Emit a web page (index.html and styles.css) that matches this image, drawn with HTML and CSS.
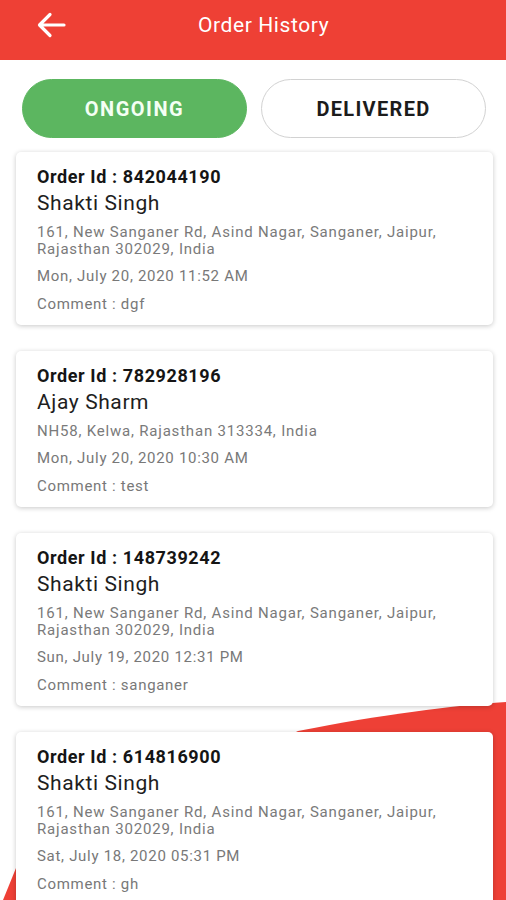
FILE: index.html
```html
<!DOCTYPE html>
<html>
<head>
<meta charset="utf-8">
<link rel="stylesheet" href="styles.css">
</head>
<body>
<div class="screen">
  <svg class="blob" width="506" height="900" viewBox="0 0 506 900"><path d="M298 731 C 385 714, 450 706, 506 702 L506 900 L3 900 L16 868 Z" fill="#ee4036"/></svg>
  <header class="topbar">
    <svg class="back" width="30" height="26" viewBox="0 0 30 26"><path d="M28 13 H4 M14 2.5 L3.5 13 L14 23.5" fill="none" stroke="#fff" stroke-width="3.2" stroke-linecap="round" stroke-linejoin="round"/></svg>
    <h1 class="title">Order History</h1>
  </header>
  <div class="tabs">
    <div class="tab tab-active">ONGOING</div>
    <div class="tab">DELIVERED</div>
  </div>
  <div class="list">
    <div class="card">
      <div class="oid">Order Id : 842044190</div>
      <div class="name">Shakti Singh</div>
      <div class="addr">161, New Sanganer Rd, Asind Nagar, Sanganer, Jaipur,<br>Rajasthan 302029, India</div>
      <div class="meta">Mon, July 20, 2020 11:52 AM</div>
      <div class="meta">Comment : dgf</div>
    </div>
    <div class="card">
      <div class="oid">Order Id : 782928196</div>
      <div class="name">Ajay Sharm</div>
      <div class="addr">NH58, Kelwa, Rajasthan 313334, India</div>
      <div class="meta">Mon, July 20, 2020 10:30 AM</div>
      <div class="meta">Comment : test</div>
    </div>
    <div class="card">
      <div class="oid">Order Id : 148739242</div>
      <div class="name">Shakti Singh</div>
      <div class="addr">161, New Sanganer Rd, Asind Nagar, Sanganer, Jaipur,<br>Rajasthan 302029, India</div>
      <div class="meta">Sun, July 19, 2020 12:31 PM</div>
      <div class="meta">Comment : sanganer</div>
    </div>
    <div class="card">
      <div class="oid">Order Id : 614816900</div>
      <div class="name">Shakti Singh</div>
      <div class="addr">161, New Sanganer Rd, Asind Nagar, Sanganer, Jaipur,<br>Rajasthan 302029, India</div>
      <div class="meta">Sat, July 18, 2020 05:31 PM</div>
      <div class="meta">Comment : gh</div>
      <div class="divider"></div>
    </div>
  </div>
</div>
</body>
</html>
```
FILE: styles.css
```css
html, body {
  margin: 0;
  padding: 0;
  background: #fff;
}
body {
  font-family: Roboto, "Liberation Sans", sans-serif;
  overflow: hidden;
}
.screen {
  position: relative;
  width: 506px;
  height: 900px;
  overflow: hidden;
}
.blob {
  position: absolute;
  left: 0;
  top: 0;
  z-index: 0;
}
.topbar {
  position: relative;
  z-index: 1;
  height: 60px;
  background: #ee4035;
  display: flex;
  align-items: center;
  padding-left: 36px;
  box-sizing: border-box;
}
.back {
  display: block;
  margin-top: -10px;
}
.title {
  margin: -10px 0 0 132px;
  font-size: 21px;
  font-weight: 400;
  color: #fff;
  letter-spacing: 0.6px;
}
.tabs {
  position: relative;
  z-index: 1;
  display: flex;
  gap: 14px;
  padding: 19px 20px 0 22px;
}
.tab {
  width: 225px;
  height: 59px;
  box-sizing: border-box;
  border-radius: 30px;
  border: 1.5px solid #d2d2d2;
  background: #fff;
  display: flex;
  align-items: center;
  justify-content: center;
  font-size: 20px;
  font-weight: 700;
  color: #1c1c1c;
  letter-spacing: 1.3px;
}
.tab-active {
  background: #5cb660;
  border-color: #5cb660;
  color: #f4fff4;
  letter-spacing: 1.5px;
}
.list {
  position: relative;
  z-index: 1;
  display: flex;
  flex-direction: column;
  gap: 26px;
  padding: 14px 12px 0 16px;
}
.card {
  width: 477px;
  box-sizing: border-box;
  background: #fff;
  border-radius: 5px;
  box-shadow: 0 1px 5px rgba(0, 0, 0, 0.22);
  padding: 14px 12px 11px 21px;
}
.oid {
  font-size: 18px;
  font-weight: 700;
  line-height: 22px;
  color: #151515;
  letter-spacing: 0.6px;
}
.name {
  font-size: 21px;
  line-height: 30px;
  color: #1e1e1e;
  letter-spacing: 0.6px;
}
.addr {
  margin-top: 6px;
  font-size: 15px;
  line-height: 17px;
  color: #7a7a7a;
  letter-spacing: 0.8px;
}
.meta {
  margin-top: 8px;
  font-size: 15px;
  line-height: 20px;
  color: #787878;
  letter-spacing: 0.7px;
}
.divider {
  margin: 6px 50px 0 64px;
  height: 3px;
  border-radius: 2px;
  background: #dcdcdc;
}
```
